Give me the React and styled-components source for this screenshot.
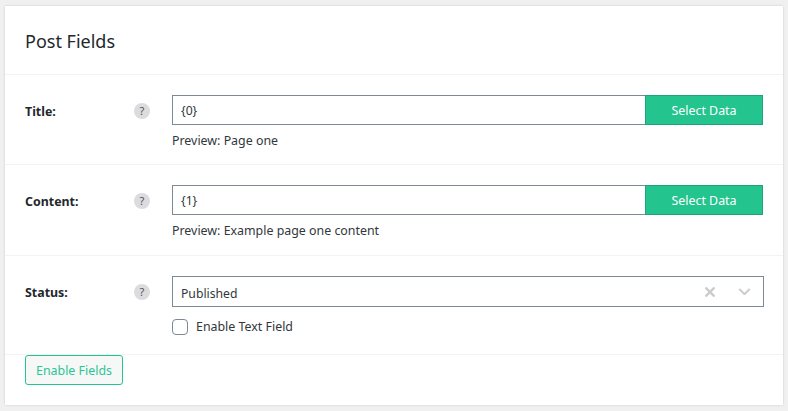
import React from 'react'
import styled, { createGlobalStyle } from 'styled-components'

const GlobalStyle = createGlobalStyle`
  html, body {
    margin: 0;
    padding: 0;
    background: #f0f0f1;
    font-family: "Noto Sans", "Open Sans", sans-serif;
    color: #32373c;
  }
`

const Page = styled.div`
  width: 788px;
  height: 411px;
  box-sizing: border-box;
  padding: 6px 5px;
  overflow: hidden;
`

const Card = styled.div`
  background: #fff;
  height: 399px;
  box-shadow: 0 0 2px rgba(0, 0, 0, 0.16);
`

const Header = styled.h2`
  margin: 0;
  height: 69px;
  box-sizing: border-box;
  padding: 21px 20px 0;
  font-size: 18px;
  line-height: 28px;
  font-weight: 400;
  color: #23282d;
  border-bottom: 1px solid #f3f3f3;
`

const Row = styled.div`
  display: grid;
  grid-template-columns: 109px 38px 1fr;
  box-sizing: border-box;
  height: ${p => p.$height}px;
  padding: 20px 19px 0 20px;
  border-bottom: 1px solid #f3f3f3;
`

const Label = styled.label`
  font-size: 12.4px;
  font-weight: 700;
  line-height: 33px;
  color: #23282d;
`

const HelpCell = styled.div`
  height: 32px;
  display: flex;
  align-items: center;
`

const Help = styled.span`
  width: 16px;
  height: 16px;
  border-radius: 50%;
  background: #dcdcde;
  color: #50575e;
  font-size: 11px;
  line-height: 16px;
  text-align: center;
`

const Controls = styled.div`
  min-width: 0;
`

const InputGroup = styled.div`
  display: flex;
  height: 30px;
  padding-right: 1px;
`

const Input = styled.div`
  flex: 1;
  box-sizing: border-box;
  border: 1px solid #7e8993;
  border-right: 0;
  padding: 1px 8px 0;
  font-size: 12.2px;
  line-height: 28px;
  color: #32373c;
`

const SelectButton = styled.button`
  width: 118px;
  box-sizing: border-box;
  border: 1px solid #1fa37c;
  background: #23c48e;
  color: #fff;
  font-family: inherit;
  font-size: 12.4px;
  padding: 1px 0 0;
`

const Preview = styled.div`
  margin-top: 6px;
  font-size: 12.4px;
  line-height: 20px;
  color: #32373c;
`

const Select = styled.div`
  display: flex;
  align-items: center;
  height: 31px;
  box-sizing: border-box;
  border: 1px solid #7e8993;
  padding: 0 12px 0 8px;
  font-size: 12.2px;
  color: #32373c;
`

const SelectValue = styled.span`
  flex: 1;
  padding-top: 3px;
`

const ClearIcon = styled.svg`
  display: block;
  fill: none;
  stroke: #ccc;
  stroke-width: 2.4;
  margin-right: 23px;
`

const ChevronIcon = styled.svg`
  display: block;
  fill: none;
  stroke: #ccc;
  stroke-width: 2.4;
`

const CheckRow = styled.label`
  display: flex;
  align-items: center;
  margin-top: 10px;
  font-size: 12.4px;
  line-height: 20px;
  color: #32373c;
`

const CheckBox = styled.span`
  width: 16px;
  height: 16px;
  box-sizing: border-box;
  border: 1px solid #7e8993;
  border-radius: 4px;
  background: #fff;
  margin-right: 8px;
`

const Footer = styled.div`
  padding: 0 20px;
`

const OutlineButton = styled.button`
  display: block;
  width: 98px;
  height: 30px;
  box-sizing: border-box;
  border: 1px solid #23c48e;
  border-radius: 3px;
  background: #f6f7f7;
  color: #2bc694;
  font-family: inherit;
  font-size: 12.4px;
  padding: 1px 0 0;
`

function DataField({ label, value, preview, height }) {
  return (
    <Row $height={height}>
      <Label>{label}</Label>
      <HelpCell>
        <Help>?</Help>
      </HelpCell>
      <Controls>
        <InputGroup>
          <Input>{value}</Input>
          <SelectButton>Select Data</SelectButton>
        </InputGroup>
        <Preview>Preview: {preview}</Preview>
      </Controls>
    </Row>
  )
}

export default function App() {
  return (
    <Page>
      <GlobalStyle />
      <Card>
        <Header>Post Fields</Header>
        <DataField label="Title:" value="{0}" preview="Page one" height={90} />
        <DataField
          label="Content:"
          value="{1}"
          preview="Example page one content"
          height={91}
        />
        <Row $height={99}>
          <Label>Status:</Label>
          <HelpCell>
            <Help>?</Help>
          </HelpCell>
          <Controls>
            <Select>
              <SelectValue>Published</SelectValue>
              <ClearIcon viewBox="0 0 10 10" width="10" height="10">
                <path d="M0.5 0.5 9.5 9.5 M9.5 0.5 0.5 9.5" />
              </ClearIcon>
              <ChevronIcon viewBox="0 0 14 8" width="13" height="7">
                <path d="M1 1 7 7 13 1" />
              </ChevronIcon>
            </Select>
            <CheckRow>
              <CheckBox />
              Enable Text Field
            </CheckRow>
          </Controls>
        </Row>
        <Footer>
          <OutlineButton>Enable Fields</OutlineButton>
        </Footer>
      </Card>
    </Page>
  )
}
